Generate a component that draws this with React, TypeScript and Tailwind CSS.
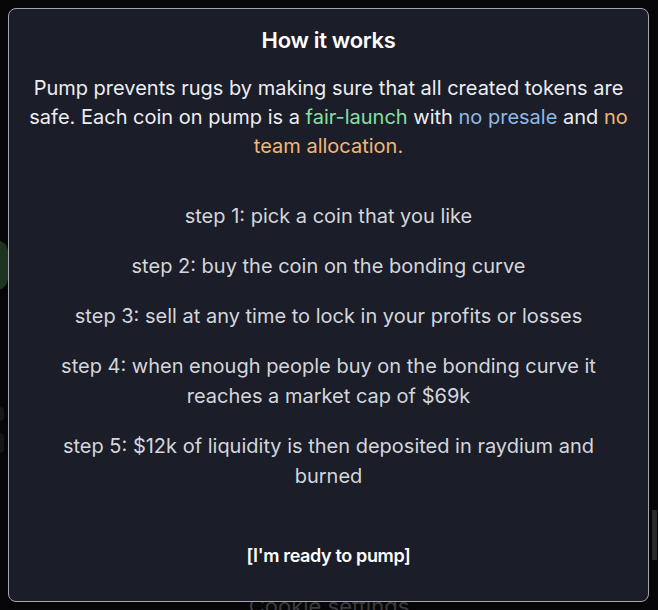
import React from 'react';

const steps = [
  'step 1: pick a coin that you like',
  'step 2: buy the coin on the bonding curve',
  'step 3: sell at any time to lock in your profits or losses',
  'step 4: when enough people buy on the bonding curve it reaches a market cap of $69k',
  'step 5: $12k of liquidity is then deposited in raydium and burned',
];

export default function App() {
  return (
    <div
      className="relative h-[610px] w-full overflow-hidden bg-[#060608]"
      style={{ fontFamily: 'Inter, "Noto Sans", sans-serif' }}
    >
      {/* page behind the dialog */}
      <div className="absolute left-[-30px] top-[240px] h-[50px] w-[38px] rounded-xl bg-[#1c3321]" />
      <div className="absolute left-[-6px] top-[407px] h-[14px] w-[10px] rounded bg-[#17171a]" />
      <div className="absolute left-[-6px] top-[433px] h-[20px] w-[10px] rounded bg-[#151518]" />
      <div className="absolute right-[1px] top-[510px] h-[50px] w-[5px] bg-[#2a2a2c]" />
      <div className="absolute inset-x-0 top-[590px] text-center text-[22px] text-[#3a3a3e]">
        Cookie settings
      </div>

      {/* dialog */}
      <div className="absolute left-2 top-2 h-[594px] w-[641px] rounded-lg border border-[#a3a6ad] bg-[#1b1d28] px-[14px] pt-[16px]">
        <div className="flex flex-col items-center text-center">
          <h2 className="text-[22px] font-semibold leading-[30px] tracking-[-0.015em] text-white">
            How it works
          </h2>
          <p className="mt-[19px] text-[20px] leading-[29px] text-[#eceef2]">
            Pump prevents rugs by making sure that all created tokens are safe. Each coin on pump is a{' '}
            <span className="text-[#86e0a2]">fair-launch</span> with{' '}
            <span className="text-[#8fb8ea]">no presale</span> and{' '}
            <span className="text-[#f2b774]">no team allocation.</span>
          </p>
          <div className="mt-[40px] flex max-w-[590px] flex-col gap-[20px]">
            {steps.map((s) => (
              <p key={s} className="text-[20px] leading-[30px] text-[#d4d6dc]">
                {s}
              </p>
            ))}
          </div>
          <button className="mt-[50px] text-[18px] font-semibold leading-[30px] tracking-[-0.02em] text-white">
            [I'm ready to pump]
          </button>
        </div>
      </div>
    </div>
  );
}
